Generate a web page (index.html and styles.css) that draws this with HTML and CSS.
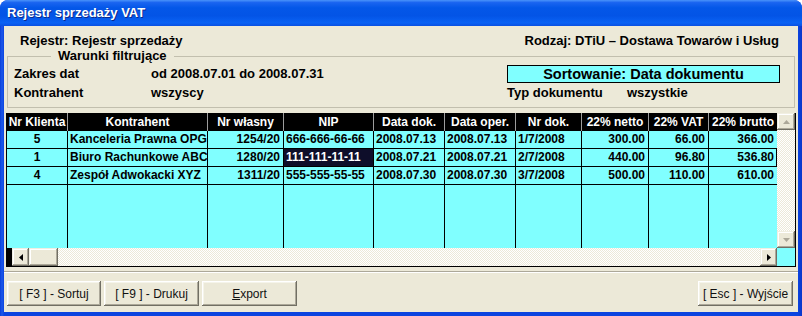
FILE: index.html
```html
<!DOCTYPE html>
<html lang="pl">
<head>
  <meta charset="UTF-8" />
  <title>Rejestr sprzedaży VAT</title>
  <link rel="stylesheet" href="styles.css">
</head>
<body>
  <div class="window">
    <div class="titlebar">Rejestr sprzedaży VAT</div>
    <div class="client">
      <div class="info-row">
        <span>Rejestr: Rejestr sprzedaży</span>
        <span>Rodzaj: DTiU – Dostawa Towarów i Usług</span>
      </div>

      <fieldset class="filters">
        <legend>Warunki filtrujące</legend>
        <div class="filters-body">
          <div class="filters-left">
            <div class="frow"><span class="flabel">Zakres dat</span><span>od 2008.07.01 do 2008.07.31</span></div>
            <div class="frow"><span class="flabel">Kontrahent</span><span>wszyscy</span></div>
          </div>
          <div class="filters-right">
            <div class="sort-box">Sortowanie: Data dokumentu</div>
            <div class="frow"><span class="flabel">Typ dokumentu</span><span>wszystkie</span></div>
          </div>
        </div>
      </fieldset>

      <div class="grid">
        <div class="grid-main">
          <div class="table-wrap">
            <table class="data">
              <colgroup>
                <col style="width:61px"><col style="width:140px"><col style="width:76px"><col style="width:90px"><col style="width:71px">
                <col style="width:71px"><col style="width:66px"><col style="width:67px"><col style="width:60px"><col style="width:68px">
              </colgroup>
              <thead>
                <tr>
                  <th>Nr Klienta</th>
                  <th>Kontrahent</th>
                  <th>Nr własny</th>
                  <th>NIP</th>
                  <th>Data dok.</th>
                  <th>Data oper.</th>
                  <th>Nr dok.</th>
                  <th>22% netto</th>
                  <th>22% VAT</th>
                  <th>22% brutto</th>
                </tr>
              </thead>
              <tbody>
                <tr>
                  <td class="c">5</td>
                  <td>Kanceleria Prawna OPG</td>
                  <td class="r">1254/20</td>
                  <td>666-666-66-66</td>
                  <td>2008.07.13</td>
                  <td>2008.07.13</td>
                  <td>1/7/2008</td>
                  <td class="r">300.00</td>
                  <td class="r">66.00</td>
                  <td class="r">366.00</td>
                </tr>
                <tr class="focus">
                  <td class="c">1</td>
                  <td>Biuro Rachunkowe ABC</td>
                  <td class="r">1280/20</td>
                  <td class="selected">111-111-11-11</td>
                  <td>2008.07.21</td>
                  <td>2008.07.21</td>
                  <td>2/7/2008</td>
                  <td class="r">440.00</td>
                  <td class="r">96.80</td>
                  <td class="r">536.80</td>
                </tr>
                <tr>
                  <td class="c">4</td>
                  <td>Zespół Adwokacki XYZ</td>
                  <td class="r">1311/20</td>
                  <td>555-555-55-55</td>
                  <td>2008.07.30</td>
                  <td>2008.07.30</td>
                  <td>3/7/2008</td>
                  <td class="r">500.00</td>
                  <td class="r">110.00</td>
                  <td class="r">610.00</td>
                </tr>
                <tr class="filler">
                  <td></td><td></td><td></td><td></td><td></td>
                  <td></td><td></td><td></td><td></td><td></td>
                </tr>
              </tbody>
            </table>
          </div>
          <div class="vscroll">
            <div class="sb-btn">
              <svg width="7" height="4" viewBox="0 0 7 4"><path d="M0 4 L3.5 0 L7 4 Z" fill="#aca899"/></svg>
            </div>
            <div class="track"></div>
            <div class="sb-btn">
              <svg width="7" height="4" viewBox="0 0 7 4"><path d="M0 0 L3.5 4 L7 0 Z" fill="#aca899"/></svg>
            </div>
          </div>
        </div>
        <div class="hscroll">
          <div class="hs-black"></div>
          <div class="sb-btn">
            <svg width="4" height="7" viewBox="0 0 4 7"><path d="M4 0 L0 3.5 L4 7 Z" fill="#000"/></svg>
          </div>
          <div class="thumb"></div>
          <div class="track"></div>
          <div class="sb-btn">
            <svg width="4" height="7" viewBox="0 0 4 7"><path d="M0 0 L4 3.5 L0 7 Z" fill="#000"/></svg>
          </div>
          <div class="corner"></div>
        </div>
      </div>

      <div class="sep"></div>

      <div class="buttons">
        <button class="btn btn-first">[ F3 ] - Sortuj</button>
        <button class="btn">[ F9 ] - Drukuj</button>
        <button class="btn"><u>E</u>xport</button>
        <button class="btn btn-exit">[ Esc ] - Wyjście</button>
      </div>
    </div>
  </div>
</body>
</html>
```

FILE: styles.css
```css
* {
  box-sizing: border-box;
}

body {
  margin: 0;
  background: #fff;
  font-family: 'Liberation Sans', Arial, sans-serif;
}

.window {
  width: 802px;
  height: 316px;
  display: flex;
  flex-direction: column;
  background: linear-gradient(to right, #0a3fd9, #1c58ea 2px, #0b44e0 4px, #0b44e0 calc(100% - 4px), #0a36c8);
  border-radius: 8px 8px 0 0;
  overflow: hidden;
}

.titlebar {
  height: 26px;
  padding: 4px 0 0 7px;
  color: #fff;
  font-size: 13px;
  font-weight: bold;
  line-height: 18px;
  text-shadow: 1px 1px #0b2a8c;
  background: linear-gradient(to bottom, #4a93fa 0%, #1a64f0 10%, #0457e8 30%, #0354e6 60%, #0a62f4 88%, #0a50e2 100%);
}

.client {
  flex: 1;
  margin: 0 4px 4px 4px;
  background: #ece9d8;
  color: #000;
  font-size: 13px;
  font-weight: bold;
}

.info-row {
  display: flex;
  justify-content: space-between;
  padding: 7px 19px 0 16px;
  line-height: 15px;
}

/* group box */
.filters {
  margin: 0 3px;
  padding: 0 14px 5px 6px;
  border: 1px solid #c2bfae;
  min-width: 0;
}

.filters legend {
  margin-left: 37px;
  padding: 0 7px;
  line-height: 16px;
}

.filters-body {
  display: flex;
  justify-content: space-between;
}

.frow {
  display: flex;
  height: 19px;
  line-height: 19px;
  white-space: nowrap;
}

.filters-left .flabel {
  width: 137px;
}

.filters-right {
  width: 273px;
}

.filters-right .flabel {
  width: 120px;
}

.sort-box {
  height: 18px;
  margin-top: 1px;
  border: 1px solid #000;
  background: #80ffff;
  text-align: center;
  font-size: 14.5px;
  line-height: 16px;
}

/* data grid */
.grid {
  margin: 5px 2px 0 2px;
  height: 154px;
  border: 1px solid #000;
  border-top: 0;
  display: flex;
  flex-direction: column;
}

.grid-main {
  display: flex;
  height: 135px;
}

.table-wrap {
  width: 770px;
  height: 135px;
  overflow: hidden;
  background: #80ffff;
}

.data {
  width: 770px;
  table-layout: fixed;
  border-collapse: separate;
  border-spacing: 0;
  font-size: 12px;
  font-weight: bold;
}

.data th {
  height: 18px;
  padding: 0;
  background: #000;
  color: #fff;
  line-height: 18px;
  text-align: center;
  border-right: 1px solid #9c9c9c;
  white-space: nowrap;
  overflow: hidden;
}

.data th:last-child {
  border-right: 0;
}

.data td {
  padding: 0 2px;
  line-height: 17px;
  border-right: 1px solid #000;
  border-bottom: 1px solid #000;
  white-space: nowrap;
  overflow: hidden;
}

.data td:last-child {
  border-right: 0;
}

.data td.c {
  text-align: center;
}

.data td.r {
  text-align: right;
  padding-right: 3px;
}

.data td.selected {
  background: #0e0e2a;
  color: #fff;
}

.data tr.focus td:last-child {
  box-shadow: inset -1px 0 #000;
}

.data tr.filler td {
  height: 63px;
  border-bottom: 0;
}

/* scrollbars */
.vscroll {
  width: 18px;
  display: flex;
  flex-direction: column;
}

.track {
  flex: 1;
  background: repeating-conic-gradient(#fff 0 25%, #ece9d8 0 50%) 0 0 / 2px 2px;
}

.sb-btn {
  width: 18px;
  height: 17px;
  flex: none;
  display: flex;
  align-items: center;
  justify-content: center;
  background: #ece9d8;
  box-shadow: inset -1px -1px #716f64, inset 1px 1px #f1efe2, inset -2px -2px #aca899, inset 2px 2px #fff;
}

.hscroll {
  display: flex;
  height: 18px;
}

.hscroll .sb-btn {
  width: 17px;
  height: 18px;
}

.hs-black {
  width: 5px;
  background: #000;
}

.thumb {
  width: 29px;
  background: #ece9d8;
  box-shadow: inset -1px -1px #716f64, inset 1px 1px #f1efe2, inset -2px -2px #aca899, inset 2px 2px #fff;
}

.corner {
  width: 18px;
  background: #80ffff;
}

.sep {
  margin-top: 4px;
  height: 2px;
  border-top: 1px solid #aca899;
  border-bottom: 1px solid #fff;
}

/* buttons */
.buttons {
  display: flex;
  gap: 3px;
  margin-top: 8px;
  padding: 0 5px 0 3px;
}

.btn {
  width: 95px;
  height: 25px;
  padding: 0;
  border: 0;
  background: #ece9d8;
  color: #111;
  font-family: 'Liberation Sans', Arial, sans-serif;
  font-size: 12px;
  box-shadow: inset -1px -1px #716f64, inset 1px 1px #fff, inset -2px -2px #aca899, inset 2px 2px #f5f4ea;
}

.btn-first {
  width: 94px;
}

.btn-exit {
  margin-left: auto;
}
```
